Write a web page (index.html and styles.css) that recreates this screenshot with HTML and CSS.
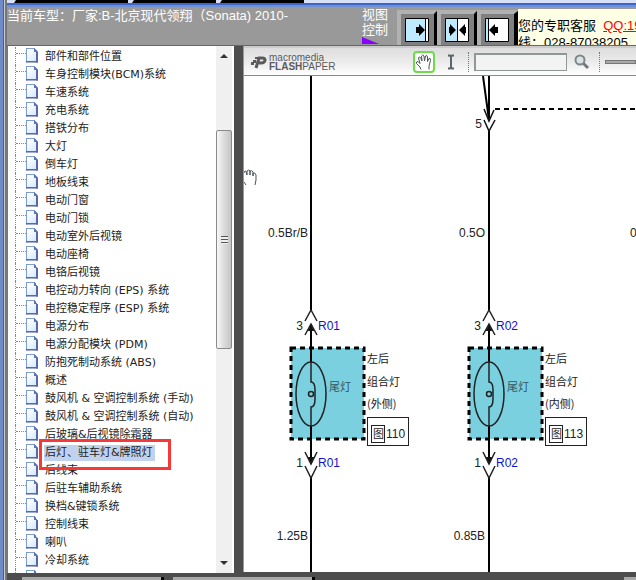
FILE: index.html
```
<!DOCTYPE html>
<html lang="zh-CN">
<head>
<meta charset="utf-8">
<title>电路图</title>
<link rel="stylesheet" href="styles.css">
</head>
<body>
<div class="window">
  <div class="tabs"><i></i><i></i><i></i></div>
  <header class="header">
    <h1 class="model">当前车型：厂家:B-北京现代领翔（Sonata) 2010-</h1>
    <div class="view-label">视图<br>控制<svg width="17" height="8"><path d="M0 0L17 7H0Z" fill="#80f"/></svg></div>
    <div class="view-buttons">
      <button type="button" aria-label="显示目录"><svg width="40" height="35"><path d="M0 0H40L37 4H4V35H0Z" fill="#b1b1b1"/><path d="M4 4H37V35H4Z" fill="#808080"/><path d="M37 4L40 1V35H37Z"/><path d="M8.500 8.500H31.500V31.500H8.500Z" fill="#bdeaff" stroke="#000"/><path d="M28 9H31V31H28Z" fill="#fff"/><path d="M28.500 9V31" stroke="#000"/><path d="M19 17H22V14L28 20L22 26V23H19Z"/></svg></button>
      <button type="button" aria-label="平分窗口"><svg width="40" height="35"><path d="M0 0H40L37 4H4V35H0Z" fill="#b1b1b1"/><path d="M4 4H37V35H4Z" fill="#808080"/><path d="M37 4L40 1V35H37Z"/><path d="M8.500 8.500H31.500V31.500H8.500Z" fill="#fff" stroke="#000"/><path d="M9 9H20V31H9Z" fill="#bdeaff"/><path d="M20.500 9V31" stroke="#000"/><path d="M12 17H13V14L19 20L13 26V23H12Z"/><path d="M29 17H28V14L22 20L28 26V23H29Z"/></svg></button>
      <button type="button" aria-label="隐藏目录"><svg width="41" height="35"><path d="M0 0H41L37 4H4V35H0Z" fill="#b1b1b1"/><path d="M4 4H37V35H4Z" fill="#808080"/><path d="M37 4L41 1V35H37Z"/><path d="M8.500 8.500H31.500V31.500H8.500Z" fill="#fff" stroke="#000"/><path d="M9 9H11V31H9Z" fill="#bdeaff"/><path d="M11.500 9V31" stroke="#000"/><path d="M21 17H18V14L12 20L18 26V23H21Z"/></svg></button>
    </div>
    <div class="contact">您的专职客服&nbsp; <a href="#qq">QQ:19</a><br>线：028-87038205</div>
  </header>
  <main class="panes">
    <nav class="sidebar" aria-label="目录">
      <ul class="tree">
        <li><a href="#t">部件和部件位置</a></li>
        <li><a href="#t">车身控制模块(BCM)系统</a></li>
        <li><a href="#t">车速系统</a></li>
        <li><a href="#t">充电系统</a></li>
        <li><a href="#t">搭铁分布</a></li>
        <li><a href="#t">大灯</a></li>
        <li><a href="#t">倒车灯</a></li>
        <li><a href="#t">地板线束</a></li>
        <li><a href="#t">电动门窗</a></li>
        <li><a href="#t">电动门锁</a></li>
        <li><a href="#t">电动室外后视镜</a></li>
        <li><a href="#t">电动座椅</a></li>
        <li><a href="#t">电铬后视镜</a></li>
        <li><a href="#t">电控动力转向 (EPS) 系统</a></li>
        <li><a href="#t">电控稳定程序 (ESP) 系统</a></li>
        <li><a href="#t">电源分布</a></li>
        <li><a href="#t">电源分配模块 (PDM)</a></li>
        <li><a href="#t">防抱死制动系统 (ABS)</a></li>
        <li><a href="#t">概述</a></li>
        <li><a href="#t">鼓风机 &amp; 空调控制系统 (手动)</a></li>
        <li><a href="#t">鼓风机 &amp; 空调控制系统 (自动)</a></li>
        <li><a href="#t">后玻璃&amp;后视镜除霜器</a></li>
        <li class="current"><a href="#t">后灯、驻车灯&amp;牌照灯</a><span class="mark"></span></li>
        <li><a href="#t">后线束</a></li>
        <li><a href="#t">后驻车辅助系统</a></li>
        <li><a href="#t">换档&amp;键锁系统</a></li>
        <li><a href="#t">控制线束</a></li>
        <li><a href="#t">喇叭</a></li>
        <li><a href="#t">冷却系统</a></li>
        <li></li>
      </ul>
      <div class="scrollbar">
        <svg width="16" height="20"><path d="M4 12L8 8L12 12Z" fill="#333"/></svg>
        <div class="track"><div class="thumb"><i></i></div></div>
        <svg width="16" height="20"><path d="M4 8H12L8 12Z" fill="#333"/></svg>
      </div>
    </nav>
    <section class="viewer">
      <div class="toolbar">
        <div class="brand">
          <svg width="17" height="16" viewBox="0 0 17 16"><path d="M5 14L8 4H11Q14.500 4 14 6.500Q13.500 9 10 9H8" fill="none" stroke="#5a5a5a" stroke-width="3"/><path d="M4 3H8V5H4ZM0 8H3V11H0ZM2 6H5V9H2Z" fill="#5a5a5a"/></svg>
          <div class="brand-name"><span>macromedia</span><span><b>FLASH</b>PAPER</span></div>
        </div>
        <button type="button" class="hand" aria-label="手形工具"><svg width="18" height="18" viewBox="0 0 18 18"><path d="M6 16.500L5 14L1.500 10.500Q1 8.500 3 8.500L5 10.500L3.500 5Q4 3 5.500 4.500L7 8L6.500 3Q7.500 1 9 3L9.500 8L10.500 3Q12 1.500 12.500 4V8.500L14 5.500Q16 5 15.500 7.500L14 13V16.500" fill="#fff" stroke="#4b5558"/></svg></button>
        <button type="button" class="caret" aria-label="选择文本"><svg width="8" height="16"><path d="M1 1.500H3L4 3L5 1.500H7M1 14.500H3L4 13L5 14.500H7M4 3V13" fill="none" stroke="#59666b" stroke-width="2"/></svg></button>
        <span class="divider"></span>
        <input type="text" aria-label="查找">
        <button type="button" class="find" aria-label="搜索"><svg width="16" height="16"><path d="M9 9L14 14" stroke="#777" stroke-width="3"/><circle cx="6" cy="6" r="4.500" fill="#dce3e7" stroke="#7d878b" stroke-width="2"/></svg></button>
        <span class="divider"></span>
        <span class="slider"></span>
      </div>
      <div class="page">
        <svg class="diagram" viewBox="244 76 392 496" preserveAspectRatio="xMinYMin slice">
          <defs>
            <g id="lamp">
              <rect x="-20" y="348" width="73" height="91" fill="#7bd0e0" stroke="#000" stroke-width="3" stroke-dasharray="5 4"/>
              <g fill="none" stroke="#222">
                <path d="M-6 321L0 310L6 321M-6 335L0 324L6 335M-6 452L0 464L6 452M-6 466L0 478L6 466" stroke-width="1.500"/>
                <path d="M0 324V362M0 426V464" stroke="#000" stroke-width="2"/>
                <path d="M0 362V382Q4 382 4 390V399Q4 407 0 407V426" stroke-width="1.500"/>
                <ellipse cy="394" rx="15" ry="32" stroke-width="1.500"/>
                <circle cy="394" r="2.500" stroke-width="1.500"/>
                <path d="M-3 331L0 324L3 331M-3 457L0 464L3 457" fill="#111"/>
                <rect x="56.500" y="417.500" width="41" height="28"/>
                <rect x="60.500" y="425.500" width="13" height="17"/>
              </g>
            </g>
          </defs>
          <path d="M311 76V310M311 478V572M489 76V118M489 131V310M489 478V572M483 76L489 120" stroke="#000" stroke-width="2" fill="none"/>
          <path d="M484 109L489 121L494 110M484 120L489 131L495 120" stroke="#111" stroke-width="1.500" fill="none"/>
          <path d="M495 109H636" stroke="#000" stroke-width="2" stroke-dasharray="5 4"/>
          <use href="#lamp" x="311"/>
          <use href="#lamp" x="489"/>
          <g class="wire">
            <text x="308" y="237" text-anchor="end">0.5Br/B</text>
            <text x="485" y="237" text-anchor="end">0.5O</text>
            <text x="630" y="237">0.5</text>
            <text x="482" y="128" text-anchor="end">5</text>
            <text x="303" y="330" text-anchor="end">3</text>
            <text x="481" y="330" text-anchor="end">3</text>
            <text x="303" y="467" text-anchor="end">1</text>
            <text x="481" y="467" text-anchor="end">1</text>
            <text x="308" y="540" text-anchor="end">1.25B</text>
            <text x="485" y="540" text-anchor="end">0.85B</text>
            <text x="386" y="438">110</text>
            <text x="564" y="438">113</text>
          </g>
          <g class="wire pin">
            <text x="318" y="330">R01</text><text x="318" y="467">R01</text>
            <text x="496" y="330">R02</text><text x="496" y="467">R02</text>
          </g>
          <g class="part">
            <text x="329" y="391" class="faint">尾灯</text><text x="507" y="391" class="faint">尾灯</text>
            <text x="367" y="363">左后</text><text x="367" y="386">组合灯</text><text x="367" y="408">(外侧)</text>
            <text x="545" y="363">左后</text><text x="545" y="386">组合灯</text><text x="545" y="408">(内侧)</text>
            <text x="373" y="438">图</text><text x="551" y="438">图</text>
          </g>
          <path transform="translate(241 168)" d="M3 5Q3 3 5 3L6 7V3Q8 1 9 3V7V3Q11 2 12 4V8V5Q14 4 15 7V12L14 17M3 14L5 17" fill="#fff" stroke="#4b5558"/>
        </svg>
      </div>
    </section>
  </main>
  <footer class="footer"><i></i><i></i><i></i></footer>
</div>
</body>
</html>
```
FILE: styles.css
```
* { box-sizing: border-box; }
body { margin: 0; background: #4d4d4d; font-family: "Liberation Sans", "Noto Sans CJK SC", sans-serif; }
button { padding: 0; border: 0; background: none; }
svg { display: block; flex: none; }
.window { display: flex; flex-direction: column; height: 100vh; overflow: hidden; padding-left: 7px; background: linear-gradient(90deg, #6f8bc9 0 3px, #3d5fae 3px 4px, #ccc 4px 5px, #777 5px 7px, #4d4d4d 7px); }
.tabs { display: flex; gap: 4px; height: 7px; padding-left: 7px; background: linear-gradient(#d8e0f8 0 3px, #3d67c8 3px 5px, #7190d4 5px 7px); }
.tabs i { width: 84px; height: 3px; background: #000; clip-path: polygon(2px 0, 100% 0, 100% 100%, 0 100%); }
.tabs i:nth-child(1) { width: 114px; }
.header { display: flex; height: 39px; overflow: hidden; background: #999; border-bottom: 1px solid #666; color: #fff; }
.model { flex: 0 0 355px; margin: 0; font-size: 13px; line-height: 17px; font-weight: 400; white-space: nowrap; }
.view-label { flex: 0 0 35px; font-size: 13px; line-height: 15px; }
.view-buttons { display: flex; flex: none; padding-top: 3px; }
.contact { flex: 1; min-width: 0; margin-top: 2px; padding-top: 8px; overflow: hidden; white-space: nowrap; background: #ffffe6; color: #000; font-size: 13px; line-height: 17px; }
.contact a { color: #f00; }
.panes { display: flex; flex: 1; min-height: 0; gap: 9px; }
.sidebar { display: flex; flex: 0 0 227px; overflow: hidden; background: #fff; border-left: 1px solid #777; border-right: 2px solid #fff; }
.tree { flex: 1; margin: 0; padding: 1px 0 0 7px; list-style: none; font-family: "DejaVu Sans", "Noto Sans CJK SC", sans-serif; font-size: 11px; line-height: 18px; white-space: nowrap; }
.tree li { display: flex; align-items: center; position: relative; height: 18px; border-left: 1px dotted #888; }
.tree li::before { content: ""; width: 10px; height: 1px; margin-bottom: 4px; border-top: 1px dotted #888; }
.tree li::after { content: ""; order: 1; width: 12px; height: 15px; margin-bottom: 2px; background: linear-gradient(45deg, #5c74bd 50%, transparent 50%) 8px 0 / 4px 4px no-repeat, linear-gradient(#5c66a4, #5c66a4) 10px 4px / 2px 11px no-repeat, linear-gradient(#5c66a4, #5c66a4) 0 13px / 12px 2px no-repeat, linear-gradient(#7c9bd8, #7c9bd8) 0 0 / 8px 1px no-repeat, linear-gradient(#7c9bd8, #7c9bd8) 0 0 / 1px 15px no-repeat, linear-gradient(135deg, #fff 20%, #c8e4ff); clip-path: polygon(0 0, 8px 0, 100% 4px, 100% 100%, 0 100%); }
.tree a { order: 2; margin: 1px 0 0 6px; padding: 0 2px 0 1px; line-height: 16px; color: #222; text-decoration: none; }
.current a { background: #c1d2ee; }
.mark { position: absolute; z-index: 1; top: -4px; left: 23px; width: 132px; height: 31px; border: 3px solid #f83838; }
.scrollbar { display: flex; flex-direction: column; flex: 0 0 16px; background: #f0f0f0; }
.track { display: grid; flex: 1; grid-template-rows: 64fr 219fr 204fr; }
.thumb { display: grid; grid-row: 2; place-items: center; border: 1px solid #8a8a8a; border-radius: 2px; background: linear-gradient(90deg, #f8f8f8, #dedede 45%, #c4c4c4); }
.thumb i { width: 7px; height: 8px; background: repeating-linear-gradient(#555 0 1px, #eee 1px 3px); }
.viewer { display: flex; flex: 1; flex-direction: column; min-width: 0; margin-bottom: 1px; background: #fff; border-left: 1px solid #999; }
.toolbar { display: flex; align-items: center; flex: 0 0 30px; overflow: hidden; border-top: 2px solid #ccc; border-bottom: 1px solid #888; background: linear-gradient(#ddd, #eee 60%, #fff); }
.brand { display: flex; gap: 1px; flex: 0 0 169px; align-items: center; padding-left: 7px; color: #5a5a5a; }
.brand-name { display: flex; flex-direction: column; font-size: 10px; line-height: 9px; }
.hand { display: grid; flex: none; place-items: center; width: 22px; height: 22px; border: 2px solid #6ddb4a; border-radius: 4px; background: #fff; }
.caret { margin: 0 13px 0 12px; }
.divider { flex: none; height: 20px; border-left: 1px dotted #777; }
.toolbar input { flex: 0 0 93px; width: 93px; height: 18px; margin: 0 7px 0 5px; padding: 0 3px; border: 2px solid #8f9797; border-width: 2px 1px 1px 2px; background: #f3f3f3; }
.find { margin-right: 9px; }
.slider { flex: 1; height: 4px; margin-left: 5px; border: 1px solid #777; background: #aaa; }
.page { flex: 1; min-height: 0; overflow: hidden; }
.diagram { width: 100%; height: 100%; }
.wire { font-family: "Liberation Sans Narrow", "Liberation Sans", sans-serif; font-size: 12px; fill: #222; }
.pin { fill: #11c; }
.part { font-family: "Noto Sans CJK SC", sans-serif; font-size: 11px; fill: #222; }
.faint { fill: #2d5863; }
.footer { display: flex; flex: 0 0 7px; align-items: flex-end; gap: 9px; padding-left: 15px; }
.footer i { width: 142px; height: 3px; background: #aaa; border-right: 3px solid #000; }
.footer i:last-child { width: 12px; margin-left: auto; border: 0; }
```
